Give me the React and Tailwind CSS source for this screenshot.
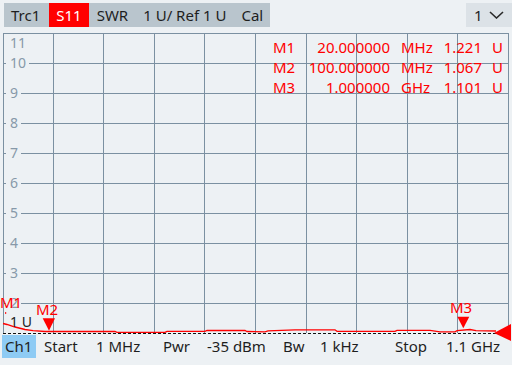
const gridX = [0, 50, 100, 151, 201, 252, 303, 353, 404, 454, 505];
const gridY = [0, 30, 60, 90, 120, 150, 180, 210, 240, 270];

// y axis labels: [text, top]
const axisLabels = [
  ["11", 3],
  ["10", 23],
  ["9", 53],
  ["8", 83],
  ["7", 113],
  ["6", 143],
  ["5", 173],
  ["4", 203],
  ["3", 233],
  ["2", 263],
];

const markers = [
  { name: "M1", freq: "20.000000", unit: "MHz", val: "1.221" },
  { name: "M2", freq: "100.000000", unit: "MHz", val: "1.067" },
  { name: "M3", freq: "1.000000", unit: "GHz", val: "1.101" },
];

// trace points in page coords, shifted to chart coords below
const tracePage = [
  [3, 323.5], [7, 324.5], [15, 327], [25, 329.5], [33, 330.7], [45, 331.5],
  [115, 331.5], [117, 332.3], [165, 332.3], [167, 331.3], [205, 331.3],
  [207, 330.5], [245, 330.5], [247, 331.5], [265, 331.8], [268, 330.8],
  [295, 329.8], [335, 329.8], [337, 331.3], [395, 331.3], [397, 330.3],
  [430, 330.3], [440, 331.8], [455, 331.8], [457, 330.7], [470, 329.5],
  [476, 330.7], [496, 331],
];
const trace = tracePage.map(([x, y]) => `${x - 3},${y - 33}`).join(" ");

function Graticule() {
  return (
    <svg
      className="absolute left-0 top-0 overflow-visible"
      width="509"
      height="310"
      viewBox="0 0 509 310"
    >
      {gridY.map((y) => (
        <line key={"h" + y} x1="0" x2="505" y1={y + 0.5} y2={y + 0.5} stroke="#7b90a1" strokeWidth="1" />
      ))}
      {gridX.map((x) => (
        <line key={"v" + x} x1={x + 0.5} x2={x + 0.5} y1="0" y2="300" stroke="#7b90a1" strokeWidth="1" />
      ))}
      <line x1="0" x2="505" y1="300.5" y2="300.5" stroke="#111" strokeWidth="1" strokeDasharray="3 2" />
      <polyline points={trace} fill="none" stroke="#ff0000" strokeWidth="1.3" />
      <line x1="2.7" x2="2.7" y1="279" y2="281" stroke="#ff0000" strokeWidth="1" />
      {/* M2 / M3 marker triangles */}
      <polygon points="39.7,285.3 52,285.3 46,297.7" fill="#ff0000" />
      <polygon points="454.3,283.7 466.3,283.7 460.3,295.3" fill="#ff0000" />
      {/* reference level arrow */}
      <polygon points="491,300 508,291 508,308" fill="#ff0000" />
    </svg>
  );
}

export default function App() {
  return (
    <div
      className="w-[512px] h-[365px] overflow-hidden bg-[#edf1f4] text-[#1e1e1e]"
      style={{ fontFamily: '"Noto Sans", "DejaVu Sans", sans-serif' }}
    >
      {/* top bar */}
      <div className="flex justify-between pt-[3px]">
        <div className="ml-[4px] flex h-[24px] items-center bg-[#b9c5cd] text-[15px] leading-[15px]">
          <span className="pl-[7px]">Trc1</span>
          <span className="ml-[9px] flex h-full items-center bg-[#ff0000] px-[7px] text-white">S11</span>
          <span className="ml-[8px]">SWR</span>
          <span className="ml-[15px]">1 U/ Ref 1 U</span>
          <span className="ml-[15px] pr-[7px]">Cal</span>
        </div>
        <div className="flex h-[24px] w-[46px] items-center bg-[#dce2e7] pl-[8px] text-[15px] leading-[15px]">
          <span>1</span>
          <svg className="ml-[6px]" width="15" height="8" viewBox="0 0 15 8">
            <path d="M1 1 L7.5 7 L14 1" fill="none" stroke="#2a2a2a" strokeWidth="1.6" />
          </svg>
        </div>
      </div>

      {/* chart */}
      <div className="relative ml-[3px] mt-[6px] h-[301px] w-[509px]">
        <Graticule />

        {axisLabels.map(([t, top]) => (
          <span
            key={t}
            className="absolute left-[3px] bg-[#edf1f4] pl-[4px] pr-[3px] text-[14px] leading-[14px] text-[#8799a9]"
            style={{ top }}
          >
            {t}
          </span>
        ))}

        {/* marker table */}
        <div className="absolute left-[270px] top-[4px] flex flex-col text-[15px] leading-[20px] text-[#ff0000]">
          {markers.map((m) => (
            <div key={m.name} className="flex">
              <span className="w-[30px]">{m.name}</span>
              <span className="w-[87px] text-right">{m.freq}</span>
              <span className="ml-[11px] w-[40px]">{m.unit}</span>
              <span className="w-[41px] text-right">{m.val}</span>
              <span className="ml-[10px]">U</span>
            </div>
          ))}
        </div>

        {/* marker labels */}
        <span className="absolute left-[-3px] top-[262px] text-[15px] leading-[15px] text-[#ff0000]">M1</span>
        <span className="absolute left-[33px] top-[269px] text-[15px] leading-[15px] text-[#ff0000]">M2</span>
        <span className="absolute left-[447px] top-[267px] text-[15px] leading-[15px] text-[#ff0000]">M3</span>
        <span className="absolute left-[7px] top-[282px] text-[14px] leading-[14px] text-[#222]">1 U</span>
      </div>

      {/* bottom bar */}
      <div className="mt-[1px] flex h-[23px] items-center text-[15px] leading-[15px]">
        <span className="ml-[2px] flex h-full w-[34px] items-center bg-[#8ecbf4] pl-[3px]">Ch1</span>
        <span className="ml-[8px] w-[52px]">Start</span>
        <span className="w-[67px]">1 MHz</span>
        <span className="w-[44px]">Pwr</span>
        <span className="w-[76px]">-35 dBm</span>
        <span className="w-[37px]">Bw</span>
        <span className="w-[75px]">1 kHz</span>
        <span className="w-[51px]">Stop</span>
        <span>1.1 GHz</span>
      </div>
    </div>
  );
}
